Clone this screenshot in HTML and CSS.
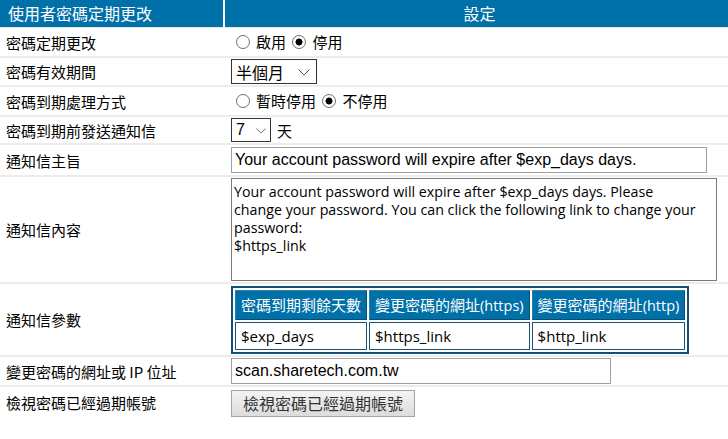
FILE: index.html
```html
<!DOCTYPE html>
<html lang="zh-Hant">
<head>
<meta charset="utf-8">
<title>使用者密碼定期更改</title>
<link rel="stylesheet" href="styles.css">
</head>
<body>
<table class="settings">
  <thead>
    <tr class="head-row">
      <th class="col-label">使用者密碼定期更改</th>
      <th class="col-value">設定</th>
    </tr>
  </thead>
  <tbody>
    <tr class="row r30">
      <td class="label">密碼定期更改</td>
      <td class="value">
        <label class="radio"><input type="radio" name="periodic">啟用</label>
        <label class="radio"><input type="radio" name="periodic" checked>停用</label>
      </td>
    </tr>
    <tr class="row r29">
      <td class="label">密碼有效期間</td>
      <td class="value">
        <select class="sel sel-period"><option>半個月</option></select>
      </td>
    </tr>
    <tr class="row r30">
      <td class="label">密碼到期處理方式</td>
      <td class="value">
        <label class="radio"><input type="radio" name="expire">暫時停用</label>
        <label class="radio"><input type="radio" name="expire" checked>不停用</label>
      </td>
    </tr>
    <tr class="row r28">
      <td class="label">密碼到期前發送通知信</td>
      <td class="value">
        <select class="sel sel-days"><option>7</option></select><span class="unit">天</span>
      </td>
    </tr>
    <tr class="row r32">
      <td class="label">通知信主旨</td>
      <td class="value">
        <input class="text text-subject" type="text" value="Your account password will expire after $exp_days days.">
      </td>
    </tr>
    <tr class="row r107">
      <td class="label">通知信內容</td>
      <td class="value">
        <textarea class="body-text">Your account password will expire after $exp_days days. Please change your password. You can click the following link to change your password:
$https_link</textarea>
      </td>
    </tr>
    <tr class="row r73">
      <td class="label">通知信參數</td>
      <td class="value">
        <table class="params">
          <tr>
            <th>密碼到期剩餘天數</th>
            <th>變更密碼的網址<span class="lat">(https)</span></th>
            <th>變更密碼的網址<span class="lat">(http)</span></th>
          </tr>
          <tr>
            <td>$exp_days</td>
            <td>$https_link</td>
            <td>$http_link</td>
          </tr>
        </table>
      </td>
    </tr>
    <tr class="row r30">
      <td class="label">變更密碼的網址或 IP 位址</td>
      <td class="value">
        <input class="text text-url" type="text" value="scan.sharetech.com.tw">
      </td>
    </tr>
    <tr class="row last">
      <td class="label">檢視密碼已經過期帳號</td>
      <td class="value">
        <button class="btn" type="button">檢視密碼已經過期帳號</button>
      </td>
    </tr>
  </tbody>
</table>
</body>
</html>
```

FILE: styles.css
```css
html, body {
  margin: 0;
  padding: 0;
  background: #ffffff;
}

body {
  font-family: "Noto Sans CJK TC", "Noto Sans", sans-serif;
  font-size: 15px;
  color: #000;
}

.settings {
  width: 728px;
  border-collapse: collapse;
  border-spacing: 0;
}

.head-row th {
  background: #0070a8;
  color: #ffffff;
  font-weight: normal;
  font-size: 16px;
  height: 27px;
  padding: 0;
  line-height: 27px;
  border-bottom: 1px solid #e6e6e6;
}

.head-row .col-label {
  width: 215px;
  text-align: left;
  padding-left: 8px;
  border-right: 2px solid #ffffff;
}

.head-row .col-value {
  text-align: center;
  padding-left: 6px;
}

.row td {
  border-bottom: 2px solid #ececec;
  padding: 0;
  vertical-align: middle;
}

.row .label {
  padding-left: 6px;
  white-space: nowrap;
  border-right: 2px solid #ffffff;
}

.row .value {
  padding-left: 6px;
}

.r28 td { height: 26px; }
.r29 td { height: 27px; }
.r30 td { height: 28px; }
.r32 td { height: 30px; }
.r107 td { height: 105px; }
.r73 td { height: 71px; }
.row.last td { height: 30px; border-bottom: none; }

/* radios */
.radio {
  display: inline-flex;
  align-items: center;
  margin-right: 0;
  font-size: 15px;
}

.radio input {
  appearance: none;
  -webkit-appearance: none;
  width: 14px;
  height: 14px;
  margin: 0 6px 0 3px;
  border: 1px solid #6f6f6f;
  border-radius: 50%;
  background: #ffffff;
  box-sizing: border-box;
}

.radio input:checked {
  background: radial-gradient(circle, #000 0, #000 3.2px, #ffffff 3.8px);
}

.radio:first-child input {
  margin-left: 5px;
}

/* selects */
.sel {
  appearance: none;
  -webkit-appearance: none;
  font-family: "Noto Sans CJK TC", sans-serif;
  font-size: 16px;
  color: #000;
  border: 1px solid #333333;
  border-radius: 0;
  background-color: #ffffff;
  background-image: url("data:image/svg+xml;utf8,<svg xmlns='http://www.w3.org/2000/svg' width='12' height='7' viewBox='0 0 12 7'><path d='M0.5 0.5 L6 6 L11.5 0.5' fill='none' stroke='%23555' stroke-width='1'/></svg>");
  background-repeat: no-repeat;
  box-sizing: border-box;
  margin: 0;
  line-height: 20px;
}

.sel-period {
  width: 86px;
  height: 25px;
  padding: 0 0 0 4px;
  background-position: 66px 9px;
}

.sel-days {
  width: 40px;
  height: 24px;
  padding: 0 0 0 4px;
  font-family: "Liberation Sans", sans-serif;
  background-size: 10px 6px;
  background-position: 24px 9px;
  vertical-align: middle;
}

.unit {
  margin-left: 6px;
  vertical-align: middle;
}

/* text inputs */
.text {
  font-family: "Liberation Sans", Arial, sans-serif;
  font-size: 16px;
  color: #000;
  border: 1px solid #a0a0a0;
  border-radius: 0;
  box-sizing: border-box;
  padding: 0 3px;
  margin: 0;
  height: 26px;
  display: block;
}

.text-subject { width: 476px; }
.text-url { width: 380px; }

.body-text {
  display: block;
  box-sizing: border-box;
  width: 486px;
  height: 103px;
  margin: 0;
  padding: 4px 15px 2px 2px;
  border: 1px solid #7a7a7a;
  border-radius: 0;
  font-family: "Open Sans", "Noto Sans", sans-serif;
  font-size: 14.25px;
  line-height: 18px;
  color: #000;
  resize: none;
  overflow: hidden;
}

/* params table */
.params {
  border: 2px solid #14506f;
  border-spacing: 2px;
  margin: 0;
}

.params th {
  background: #0070a8;
  color: #ffffff;
  font-weight: normal;
  font-size: 15px;
  height: 28px;
  padding: 0 5px;
  border: 1px solid #0c4d6f;
  border-top-color: #2a7fae;
  border-left-color: #2a7fae;
  white-space: nowrap;
  text-align: left;
}

.params td {
  background: #ffffff;
  border: 1px solid #1b5575;
  height: 26px;
  padding: 0 5px;
  font-family: "Open Sans", "Noto Sans", sans-serif;
  font-size: 15px;
  text-align: left;
}

.lat {
  font-family: "Open Sans", "Noto Sans", sans-serif;
  font-size: 14.5px;
}

/* button */
.btn {
  font-family: "Noto Sans CJK TC", sans-serif;
  font-size: 16px;
  color: #333333;
  height: 27px;
  padding: 0 11px;
  margin: 2px 0 0 0;
  border: 1px solid #a3a3a3;
  border-radius: 0;
  background: linear-gradient(#f4f4f4, #dcdcdc);
  line-height: 24px;
}
```
